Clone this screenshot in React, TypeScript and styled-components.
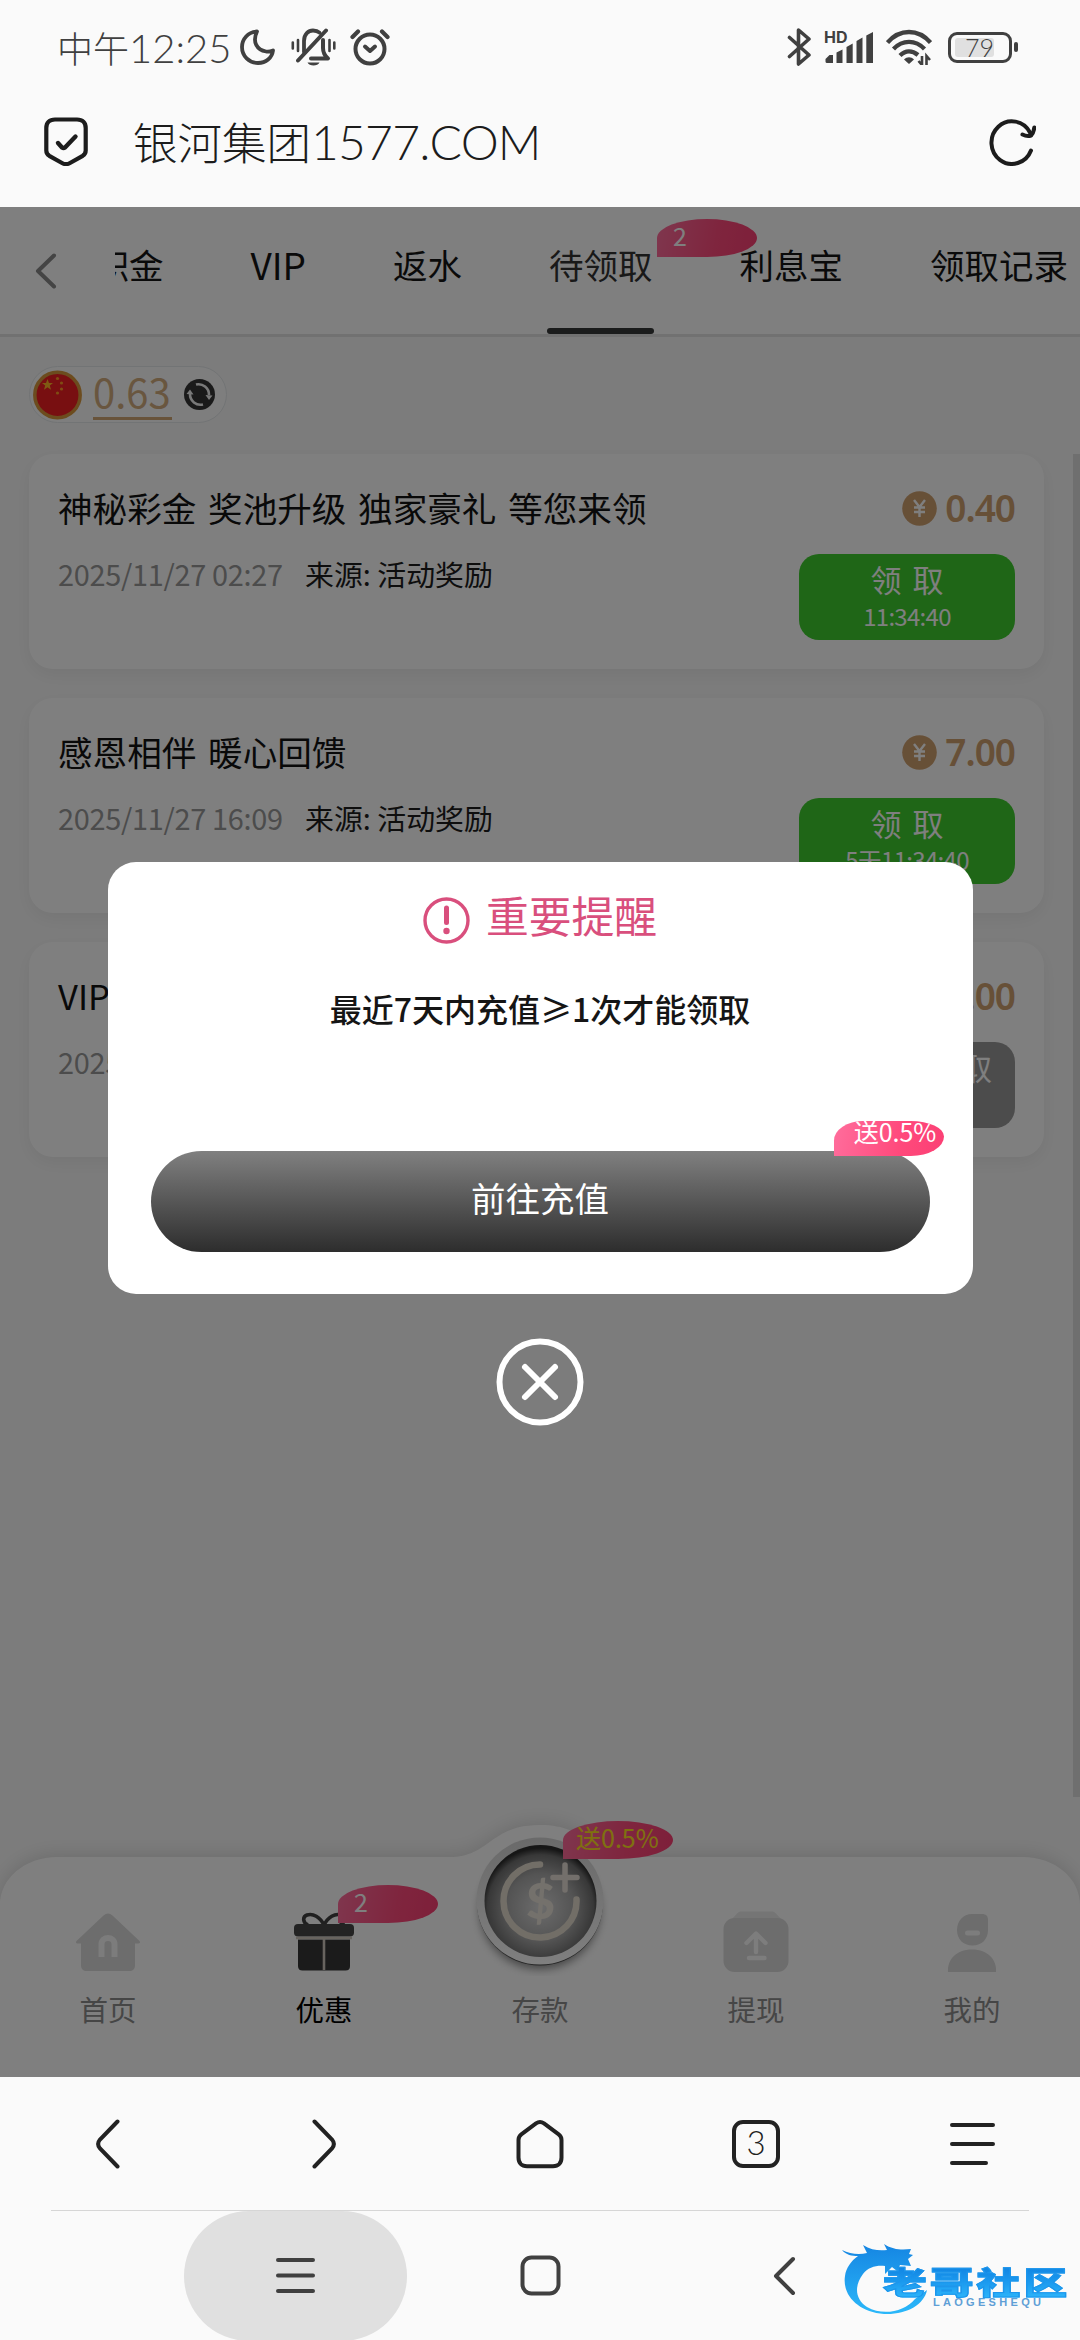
import React from "react";
import styled, { createGlobalStyle } from "styled-components";

const cjk = `"Noto Sans CJK SC", "Noto Sans", sans-serif`;
const thin = `Lato, "Noto Sans CJK SC", sans-serif`;

const GlobalStyle = createGlobalStyle`
  * { box-sizing: border-box; }
  body { margin: 0; background: #fafafa; font-family: ${cjk}; }
  svg { display: block; flex: none; }
`;

const Screen = styled.div`
  position: relative;
  width: 1080px;
  height: 2340px;
  display: flex;
  flex-direction: column;
  background: #fafafa;
  overflow: hidden;
  white-space: nowrap;
`;

/* ---------- system status bar ---------- */
const StatusBar = styled.header`
  height: 94px;
  flex: none;
  display: flex;
  align-items: center;
  justify-content: space-between;
  padding: 0 62px 0 57px;
  color: #404040;
`;
const StatusGroup = styled.div`
  display: flex;
  align-items: center;
`;
const Clock = styled.div`
  width: 183px;
  height: 46px;
  line-height: 46px;
  font: 300 36px/46px ${cjk};
`;
const ClockDigits = styled.span`
  font: 300 40px/46px ${thin};
`;
const Slot = styled.div<{ $l?: number }>`
  margin-left: ${(p) => p.$l ?? 0}px;
`;
const Signal = styled.div`
  position: relative;
  width: 50px;
  height: 34px;
  margin-left: 12px;
`;
const HdLabel = styled.span`
  position: absolute;
  left: 0;
  top: -1px;
  font: 700 16px/16px Inter, sans-serif;
`;
const Battery = styled.div`
  width: 64px;
  height: 31px;
  margin-left: 16px;
  border: 3px solid #404040;
  border-radius: 9px;
  padding: 3px 4px;
  display: flex;
`;
const BatteryFill = styled.div`
  width: 39px;
  height: 19px;
  border-radius: 3px;
  background: #e0e0e0;
  font: 300 25px/19px ${thin};
  text-align: right;
`;
const BatteryNub = styled.div`
  width: 4px;
  height: 10px;
  margin-left: 2px;
  border-radius: 2px;
  background: #404040;
`;

/* ---------- address bar ---------- */
const AddressBar = styled.div`
  height: 113px;
  flex: none;
  display: flex;
  align-items: center;
  padding: 0 44px 18px;
  color: #1c1c1c;
`;
const Address = styled.div`
  flex: 1;
  margin-left: 45px;
  font: 300 44.5px/56px ${cjk};
`;
const AddressLatin = styled.span`
  font: 300 48px/56px ${thin};
  letter-spacing: -0.8px;
`;

/* ---------- web page ---------- */
const Page = styled.main`
  position: relative;
  height: 1870px;
  flex: none;
  display: flex;
  flex-direction: column;
  background: #f9f9f9;
  overflow: hidden;
`;
const TabBar = styled.nav`
  height: 130px;
  flex: none;
  display: flex;
  border-bottom: 3px solid #e2e2e2;
  background: #fff;
`;
const Back = styled.div`
  width: 115px;
  flex: none;
  padding: 46px 0 0 35px;
`;
const TabScroller = styled.div`
  flex: 1;
  overflow: hidden;
`;
const TabRow = styled.div`
  display: flex;
  gap: 87px;
  width: max-content;
  margin-left: -20.5px;
`;
const Tab = styled.div<{ $active?: boolean }>`
  position: relative;
  height: 127px;
  padding: 36px 0 0;
  font-size: 34.5px;
  line-height: 42px;
  color: ${(p) => (p.$active ? "#333" : "#151515")};
  &::after {
    content: "";
    display: ${(p) => (p.$active ? "block" : "none")};
    position: absolute;
    left: -2px;
    right: -1px;
    bottom: 0;
    height: 6px;
    border-radius: 3px;
    background: #363838;
  }
`;
const Latin = styled.span<{ $s: number }>`
  font-size: ${(p) => p.$s}px;
`;
const Badge = styled.span<{ $x: number; $y: number; $w?: number; $h?: number; $gold?: boolean }>`
  position: absolute;
  z-index: 1;
  left: ${(p) => p.$x}px;
  top: ${(p) => p.$y}px;
  width: ${(p) => p.$w ?? 100}px;
  height: ${(p) => p.$h ?? 38}px;
  padding-left: ${(p) => (p.$w ? 13 : 16)}px;
  border-radius: 50% 50% 50% 0;
  background: linear-gradient(100deg, #ff6d9c, #ff4a7c 60%, #fb3f74);
  color: ${(p) => (p.$gold ? "#ffe01e" : "#fff")};
  font-size: 25px;
  line-height: 32px;
  overflow: hidden;
`;

const BalanceRow = styled.div`
  padding: 29px 29px 31px;
  display: flex;
`;
const BalancePill = styled.div`
  width: 198px;
  height: 57px;
  border: 1px solid #e4e8ea;
  border-radius: 29px;
  padding-left: 3px;
  display: flex;
  align-items: center;
  background: #fcfcfc;
`;
const Balance = styled.div`
  width: 79px;
  height: 49px;
  margin: 2px 12px 0 11px;
  border-bottom: 3px solid #d0a675;
  color: #d3ac7e;
  font-size: 40px;
  line-height: 41px;
`;

const ListArea = styled.section`
  height: 1343px;
  flex: none;
  display: flex;
`;
const List = styled.div`
  flex: 1;
  display: flex;
  flex-direction: column;
  gap: 29px;
  padding: 0 29px;
`;
const ScrollThumb = styled.div`
  width: 7px;
  background: #dedede;
`;
const Card = styled.article`
  height: 215px;
  flex: none;
  display: flex;
  justify-content: space-between;
  padding: 0 29px;
  border-radius: 24px;
  background: #fff;
  box-shadow: 0 6px 18px rgba(0, 0, 0, 0.06);
`;
const CardInfo = styled.div`
  padding-top: 32px;
`;
const CardTitle = styled.h3`
  margin: 0;
  font-weight: 400;
  font-size: 34.6px;
  line-height: 42px;
  word-spacing: 4px;
  color: #121212;
`;
const CardMeta = styled.div`
  margin-top: 28px;
  display: flex;
  font-size: 28.9px;
  line-height: 34px;
  color: #1c1c1c;
`;
const CardDate = styled.span`
  width: 247px;
  color: #999;
  letter-spacing: -0.3px;
`;
const CardAction = styled.div`
  padding-top: 36px;
  display: flex;
  flex-direction: column;
  align-items: flex-end;
`;
const Amount = styled.div`
  height: 36px;
  display: flex;
  align-items: center;
  gap: 8px;
  color: #cfa06f;
  font: 600 37px/36px "Noto Sans", ${cjk};
  letter-spacing: -1px;
`;
const ClaimButton = styled.button<{ $off?: boolean }>`
  width: 216px;
  height: 86px;
  margin-top: 28px;
  padding: ${(p) => (p.$off ? "0 23px 0 0" : "0")};
  border: 0;
  border-radius: 20px;
  background: ${(p) => (p.$off ? "#999" : "#3ecc2e")};
  color: #fff;
  font-family: ${cjk};
  display: flex;
  flex-direction: column;
  align-items: ${(p) => (p.$off ? "flex-end" : "center")};
`;
const ClaimLabel = styled.span`
  margin-top: 7px;
  font-size: 31px;
  line-height: 36px;
  word-spacing: 4px;
`;
const Countdown = styled.span`
  margin-top: 5px;
  font-size: 24px;
  line-height: 28px;
  letter-spacing: -0.7px;
`;

/* ---------- page bottom navigation ---------- */
const BottomNav = styled.nav`
  position: relative;
  height: 280px;
  flex: none;
  display: flex;
`;
const NavShape = styled.svg`
  position: absolute;
  left: 0;
  bottom: 0;
`;
const NavItem = styled.div<{ $active?: boolean }>`
  position: relative;
  flex: 1;
  display: flex;
  flex-direction: column;
  align-items: center;
  justify-content: flex-end;
  padding-bottom: 51px;
  color: ${(p) => (p.$active ? "#000" : "#8c8c8c")};
`;
const NavLabel = styled.span<{ $gap?: number }>`
  margin-top: ${(p) => p.$gap ?? 20}px;
  font-size: 28.5px;
  line-height: 34px;
`;

/* ---------- dialog ---------- */
const Overlay = styled.div`
  position: absolute;
  inset: 0;
  z-index: 5;
  display: flex;
  flex-direction: column;
  align-items: center;
  padding-top: 655px;
  background: rgba(0, 0, 0, 0.5);
`;
const Dialog = styled.div`
  width: 865px;
  height: 432px;
  flex: none;
  padding: 33px 43px 0;
  border-radius: 28px;
  background: #fff;
`;
const DialogTitle = styled.div`
  height: 50px;
  display: flex;
  justify-content: center;
  gap: 16px;
  color: #d94f7d;
  font-size: 42.8px;
  line-height: 38px;
`;
const DialogText = styled.div`
  margin-top: 43px;
  text-align: center;
  font-weight: 500;
  font-size: 32px;
  line-height: 40px;
  color: #151515;
`;
const PrimaryButton = styled.div`
  position: relative;
  height: 101px;
  margin-top: 123px;
  border-radius: 51px;
  background: linear-gradient(#808080, #2d2d2d);
  color: #fff;
  text-align: center;
  font-size: 34.5px;
  line-height: 92px;
`;
const DialogBadge = styled(Badge)`
  border-radius: 30px 34px 34px 0 / 20px 16px 20px 0;
  line-height: 20px;
`;
const Close = styled.div`
  margin-top: 44px;
`;

/* ---------- browser / system navigation ---------- */
const BrowserNav = styled.nav`
  height: 134px;
  flex: none;
  display: flex;
  align-items: center;
  color: #222;
`;
const Cell = styled.div`
  flex: 1;
  display: flex;
  justify-content: center;
`;
const TabCount = styled.div`
  width: 48px;
  height: 48px;
  border: 4px solid #222;
  border-radius: 11px;
  text-align: center;
  font: 300 33px/37px ${thin};
`;
const Divider = styled.div`
  position: absolute;
  left: 51px;
  right: 51px;
  top: 2210px;
  height: 1px;
  background: rgba(0, 0, 0, 0.14);
`;
const SystemNav = styled.nav`
  height: 129px;
  flex: none;
  display: flex;
  padding-left: 184px;
  align-items: center;
`;
const RecentPill = styled.div`
  width: 223px;
  height: 130px;
  border-radius: 65px;
  background: #e0e0e0;
  display: flex;
  align-items: center;
  justify-content: center;
`;
const Watermark = styled.div`
  position: absolute;
  left: 840px;
  top: 2240px;
  width: 226px;
  height: 76px;
`;
const WatermarkName = styled.div`
  position: absolute;
  left: 43px;
  top: 24px;
  font-weight: 900;
  font-size: 31px;
  line-height: 34px;
  letter-spacing: 2.2px;
  transform: scaleX(1.41);
  transform-origin: 0 0;
  background: linear-gradient(#1080e0, #1a98ee 50%, #2cb4fa);
  background-clip: text;
  -webkit-background-clip: text;
  color: transparent;
  -webkit-text-stroke: 1px #1c96ec;
`;
const WatermarkLatin = styled.div`
  position: absolute;
  left: 93px;
  top: 56px;
  font: 700 11px/12px "Liberation Sans", sans-serif;
  letter-spacing: 3.3px;
  color: #5f9fd6;
`;

const Moon = () => (
  <svg width="35" height="36" viewBox="0 0 35 36" fill="none" stroke="currentColor" strokeWidth="3.8" strokeLinejoin="round">
    <path d="M17 2.5C8 3 2 10 2 18c0 9 7 16 16 16 8 0 14-5 15-12.500-2.500 1-4.500 1.500-7 1C17 21 12 13 17 2.500z" />
  </svg>
);
const BellOff = () => (
  <svg width="45" height="38" viewBox="0 0 45 38" fill="none" stroke="currentColor" strokeLinecap="round">
    <path d="M13 24V13C13 6 17.500 2.500 22 2.500c3 0 5 .8 6.500 2.200" strokeWidth="3.800" />
    <path d="M7 32.500 35 2.500" strokeWidth="4" />
    <path d="M32 12v8c0 4 1 7 5 10.500H20" strokeWidth="4" strokeLinejoin="round" />
    <path d="M16.500 34.500h12c-1.500 4-10.500 4-12 0z" fill="currentColor" stroke="none" />
    <path d="M1.800 14.500v6M7 12v11M38.500 12v11M43.300 14.500v6" strokeWidth="2.600" />
  </svg>
);
const Alarm = () => (
  <svg width="40" height="38" viewBox="0 0 40 38" fill="none" stroke="currentColor" strokeWidth="4" strokeLinecap="round" strokeLinejoin="round">
    <circle cx="20" cy="21" r="14.500" />
    <path d="m15 18.500 5 4.500 5-4.500" />
    <path d="M2.500 9 8 3.500M37.500 9 32 3.500" strokeWidth="4.200" />
  </svg>
);
const Bluetooth = () => (
  <svg width="25" height="40" viewBox="0 0 25 40" fill="none" stroke="currentColor" strokeWidth="3.600" strokeLinecap="round" strokeLinejoin="round">
    <path d="M2.500 10.500 22 28 11.500 37V3L22 12 2.500 29.500" />
  </svg>
);
const SignalBars = () => (
  <svg width="50" height="34" viewBox="0 0 50 34" fill="currentColor">
    <path d="M1.500 31.500V29l4-4H9v8H3a1.500 1.500 0 0 1-1.500-1.500zM12.500 33V22.500l6-3V33zM22.500 33V17l6.200-3.500V33zM32.500 33V11l6-3.500V33zM42.300 33V5.500L49 2v31z" />
  </svg>
);
const Wifi = () => (
  <svg width="46" height="36" viewBox="0 0 46 36" fill="none" stroke="currentColor" strokeWidth="4.300">
    <path d="M1.500 13.500C14-.5 32-.5 44.500 13.500M7.500 20c9-9.500 22-9.500 31 0M14 26.500c5.500-5.500 12-5.500 18-.5" />
    <path d="m18 30.500 5 4.500 5-4.500c-3-3-7-3-10 0z" fill="currentColor" stroke="none" />
    <path d="M36 27v9l-3.500-4M40.500 36v-9l3.500 4" strokeWidth="2.600" />
  </svg>
);
const Shield = () => (
  <svg width="44" height="49" viewBox="0 0 44 49" fill="none" stroke="currentColor" strokeWidth="4.200" strokeLinecap="round" strokeLinejoin="round">
    <path d="M11 2.500h22c5.500 0 8.700 3.200 8.700 8.500v22.500c0 2.500-1 4-3 5.300L26 46c-3 1.700-5 1.700-8 0L5.300 38.800c-2-1.300-3-2.800-3-5.300V11c0-5.300 3.200-8.500 8.700-8.500z" />
    <path d="m14 26 4 4.500c1 .8 2 .8 3 0L31.500 19.500" strokeWidth="4.400" />
  </svg>
);
const Reload = () => (
  <svg width="47" height="48" viewBox="0 0 47 48" fill="none" stroke="currentColor" strokeWidth="4" strokeLinecap="round" strokeLinejoin="round">
    <path d="M42 32.500A20.500 21.300 0 1 1 41 14.500l1 2.500" />
    <path d="m33.500 16.500c3 1.500 6 1.800 8.500 1 2-2 3-4.500 3.300-8" />
  </svg>
);

const Flag = () => (
  <svg width="49" height="50" viewBox="0 0 49 50">
    <circle cx="24.500" cy="25" r="22.700" fill="#f01f22" stroke="#d9983c" strokeWidth="3.500" />
    <path d="m14.500 9 1.500 4h4l-3.200 2.600 1.200 4.200-3.500-2.500-3.500 2.500 1.200-4.200L9 13h4z" fill="#ffb526" />
    <g fill="#ff9a26">
      <circle cx="24.500" cy="8.500" r="1.600" />
      <circle cx="28.500" cy="13" r="1.600" />
      <circle cx="28.500" cy="19" r="1.600" />
      <circle cx="24.500" cy="23" r="1.600" />
    </g>
  </svg>
);
const Sync = () => (
  <svg width="31" height="31" viewBox="0 0 31 31">
    <circle cx="15.500" cy="15.500" r="15.500" fill="#353535" />
    <g fill="none" stroke="#f2f2f2" strokeWidth="2.600">
      <path d="M12 5.600A10.500 10.500 0 0 1 25 16" />
      <path d="M19 25.400A10.500 10.500 0 0 1 6 15" />
    </g>
    <path d="m21.500 16 7 .6-3.500 4.400zM2.500 15l3.500-4.500 3.500 5z" fill="#f2f2f2" />
  </svg>
);
const Coin = () => (
  <svg width="35" height="35" viewBox="0 0 35 35">
    <circle cx="17.500" cy="17.500" r="17.300" fill="#cfa06f" />
    <path d="m12 9 5.500 7L23 9M12 16.500h11M12 21h11M17.500 16v10" fill="none" stroke="#fff" strokeWidth="2.400" />
  </svg>
);
const HomeIcon = () => (
  <svg width="66" height="60" viewBox="0 0 66 60">
    <path d="M1.500 29 28.500 3.500c3-2.700 6-2.700 9 0L64.500 29c1 1.300.5 2.500-1 2.500H60V53c0 4-2 6-6 6H12c-4 0-6-2-6-6V31.500H2.500c-1.500 0-2-1.200-1-2.500z" fill="#dadada" />
    <path d="M26.500 45V32c0-8 13-8 13 0v13" fill="none" stroke="#f8f8f8" strokeWidth="6" strokeLinejoin="round" />
  </svg>
);
const GiftIcon = () => (
  <svg width="62" height="60" viewBox="0 0 62 60">
    <g fill="none" stroke="#404040" strokeWidth="3.600">
      <path d="M31 13C27 5 20 1 14 3c-5 2-4 8 1 10" />
      <path d="M31 13c4-8 11-12 17-10 5 2 4 8-1 10" />
    </g>
    <rect x="1" y="12" width="60" height="12.500" rx="4" fill="#474747" />
    <path d="M5 27.500h52V54c0 3-1.500 4.500-4.500 4.500h-43C6.500 58.500 5 57 5 54z" fill="#363636" />
    <path d="M3 26h56M31 26v32" stroke="#d0c8be" strokeWidth="2.600" />
  </svg>
);
const WithdrawIcon = () => (
  <svg width="66" height="61" viewBox="0 0 66 61">
    <path d="M8 9 14 2.500C15.500.8 17 .5 19 .5h29c2 0 3.500.3 5 2L59 9z" fill="#ebebeb" />
    <rect x="0.500" y="7" width="65" height="54" rx="11" fill="#dadada" />
    <path d="M33 41V23M23.500 32 33 22.500 42.500 32M26 47h15.500" fill="none" stroke="#fafafa" strokeWidth="4.400" strokeLinecap="round" strokeLinejoin="round" />
  </svg>
);
const UserIcon = () => (
  <svg width="50" height="59" viewBox="0 0 50 59">
    <path d="M25 1h10c4 0 6 2 6 6v10c0 9-6 15.500-15.500 15.500S10 26 10 17 16 1 25 1z" fill="#dadada" />
    <rect x="18" y="17.500" width="15" height="5" rx="2.500" fill="#fafafa" />
    <path d="M1 59C0 47 9 36.500 25 36.500S50 47 49 59z" fill="#dadada" />
  </svg>
);
const DepositIcon = () => (
  <svg width="150" height="150" viewBox="0 0 150 150" style={{ margin: "-10px" }}>
    <defs>
      <radialGradient id="disc" cx="50%" cy="56%" r="55%">
        <stop offset="0%" stopColor="#d8d8d8" />
        <stop offset="55%" stopColor="#a8a8a8" />
        <stop offset="86%" stopColor="#707070" />
        <stop offset="97%" stopColor="#2c2c2c" />
      </radialGradient>
      <linearGradient id="rim" x1="0" y1="0" x2="0" y2="1">
        <stop offset="0%" stopColor="#d4d4d4" />
        <stop offset="100%" stopColor="#fff" />
      </linearGradient>
    </defs>
    <ellipse cx="75" cy="84" rx="60" ry="59" fill="#888" style={{ filter: "blur(5px)" }} />
    <circle cx="75" cy="76.500" r="63" fill="#4a4a4a" />
    <circle cx="75" cy="75" r="63.500" fill="url(#rim)" />
    <circle cx="75.500" cy="75" r="56" fill="url(#disc)" />
    <path d="M75 38.500a36.500 36.500 0 1 0 36.500 35" fill="none" stroke="#e4dccf" strokeWidth="6.500" strokeLinecap="round" />
    <path d="M100 39v25M88 51.500h24" stroke="#e6ded6" strokeWidth="5.500" strokeLinecap="round" />
    <text x="75.500" y="93" textAnchor="middle" fontFamily="Lato, sans-serif" fontWeight="900" fontSize="50" fill="#e8e2d8">$</text>
  </svg>
);
const Lines = ({ w, short, gap }: { w: number; short: number; gap: number }) => (
  <svg width={w + 4} height={gap * 2 + 4} viewBox={`0 0 ${w + 4} ${gap * 2 + 4}`} stroke="currentColor" strokeWidth="4" strokeLinecap="round">
    <path d={`M2 2h${w}M2 ${gap + 2}h${w}M2 ${gap * 2 + 2}h${short}`} />
  </svg>
);

const rewards = [
  { title: "神秘彩金 奖池升级 独家豪礼 等您来领", date: "2025/11/27 02:27", amount: "0.40", left: "11:34:40" },
  { title: "感恩相伴 暖心回馈", date: "2025/11/27 16:09", amount: "7.00", left: "5天11:34:40" },
  { title: "VIP", date: "2025", amount: "0.00", left: "" },
];

export default function App() {
  return (
    <Screen>
      <GlobalStyle />
      <StatusBar>
        <StatusGroup>
          <Clock>中午<ClockDigits>12:25</ClockDigits></Clock>
          <Moon />
          <Slot $l={16}><BellOff /></Slot>
          <Slot $l={14}><Alarm /></Slot>
        </StatusGroup>
        <StatusGroup>
          <Bluetooth />
          <Signal><HdLabel>HD</HdLabel><SignalBars /></Signal>
          <Slot $l={12}><Wifi /></Slot>
          <Battery><BatteryFill>79</BatteryFill></Battery>
          <BatteryNub />
        </StatusGroup>
      </StatusBar>
      <AddressBar>
        <Shield />
        <Address>银河集团<AddressLatin>1577.COM</AddressLatin></Address>
        <Reload />
      </AddressBar>

      <Page>
        <TabBar>
          <Back>
            <svg width="22" height="36" viewBox="0 0 22 36" fill="none" stroke="#888" strokeWidth="4" strokeLinecap="round" strokeLinejoin="round">
              <path d="M19 2.500 3 18l16 15.500" />
            </svg>
          </Back>
          <TabScroller>
            <TabRow>
              <Tab>积金</Tab>
              <Tab><Latin $s={37}>VIP</Latin></Tab>
              <Tab>返水</Tab>
              <Tab $active>待领取<Badge $x={108} $y={12}>2</Badge></Tab>
              <Tab style={{ zIndex: 2 }}>利息宝</Tab>
              <Tab>领取记录</Tab>
            </TabRow>
          </TabScroller>
        </TabBar>
        <BalanceRow>
          <BalancePill>
            <Flag />
            <Balance>0.63</Balance>
            <Sync />
          </BalancePill>
        </BalanceRow>
        <ListArea>
          <List>
            {rewards.map((r) => (
              <Card key={r.title}>
                <CardInfo>
                  <CardTitle>{r.title}</CardTitle>
                  <CardMeta>
                    <CardDate>{r.date}</CardDate>
                    {r.left && <span>来源: 活动奖励</span>}
                  </CardMeta>
                </CardInfo>
                <CardAction>
                  <Amount><Coin />{r.amount}</Amount>
                  <ClaimButton $off={!r.left}>
                    <ClaimLabel>领 取</ClaimLabel>
                    {r.left && <Countdown>{r.left}</Countdown>}
                  </ClaimButton>
                </CardAction>
              </Card>
            ))}
          </List>
          <ScrollThumb />
        </ListArea>
        <BottomNav>
          <NavShape width="1080" height="300" viewBox="0 -20 1080 300">
            <path
              d="M0 280V108C0 82 24 60 58 60H450C490 60 490 28 540 28S590 60 630 60H1022C1056 60 1080 82 1080 108V280z"
              fill="#fff"
              style={{ filter: "drop-shadow(0 -3px 9px rgba(0,0,0,.12))" }}
            />
          </NavShape>
          <NavItem><HomeIcon /><NavLabel>首页</NavLabel></NavItem>
          <NavItem $active><GiftIcon /><Badge $x={122} $y={88}>2</Badge><NavLabel>优惠</NavLabel></NavItem>
          <NavItem><DepositIcon /><Badge $x={131} $y={24} $w={110} $gold>送0.5%</Badge><NavLabel $gap={26}>存款</NavLabel></NavItem>
          <NavItem><WithdrawIcon /><NavLabel>提现</NavLabel></NavItem>
          <NavItem><UserIcon /><NavLabel>我的</NavLabel></NavItem>
        </BottomNav>

        <Overlay>
          <Dialog>
            <DialogTitle>
              <svg width="47" height="47" viewBox="0 0 47 47" fill="none" stroke="currentColor" style={{ marginTop: 2 }}>
                <circle cx="23.500" cy="23.500" r="21.500" strokeWidth="3.400" />
                <path d="M23.500 11v14.500" strokeWidth="5" strokeLinecap="round" />
                <circle cx="23.500" cy="34" r="3.200" fill="currentColor" stroke="none" />
              </svg>
              重要提醒
            </DialogTitle>
            <DialogText>最近7天内充值≥1次才能领取</DialogText>
            <PrimaryButton>
              前往充值
              <DialogBadge $x={683} $y={-30} $w={110} $h={35}>送0.5%</DialogBadge>
            </PrimaryButton>
          </Dialog>
          <Close>
            <svg width="88" height="88" viewBox="0 0 88 88" fill="none" stroke="#fff" strokeLinecap="round">
              <circle cx="44" cy="44" r="40.500" strokeWidth="6" />
              <path d="m29 29 30 30M59 29 29 59" strokeWidth="6" />
            </svg>
          </Close>
        </Overlay>
      </Page>

      <BrowserNav>
        <Cell>
          <svg width="24" height="50" viewBox="0 0 24 50" fill="none" stroke="currentColor" strokeWidth="4" strokeLinecap="round">
            <path d="M21.500 2.500 4 20.500c-2.500 3-2.500 6 0 9l17.500 18" />
          </svg>
        </Cell>
        <Cell>
          <svg width="24" height="50" viewBox="0 0 24 50" fill="none" stroke="currentColor" strokeWidth="4" strokeLinecap="round">
            <path d="m2.500 2.500 17.500 18c2.500 3 2.500 6 0 9l-17.500 18" />
          </svg>
        </Cell>
        <Cell>
          <svg width="48" height="50" viewBox="0 0 48 50" fill="none" stroke="currentColor" strokeWidth="4" strokeLinejoin="round">
            <path d="M2.500 21c0-2.500.8-4.200 2.800-5.700L20 4.300c3-2 5-2 8 0l14.700 11c2 1.500 2.800 3.200 2.800 5.700v17.500c0 5.500-3 8.800-8.500 8.800H11c-5.500 0-8.500-3.300-8.500-8.800z" />
          </svg>
        </Cell>
        <Cell><TabCount>3</TabCount></Cell>
        <Cell><Lines w={41} short={34} gap={19} /></Cell>
      </BrowserNav>
      <SystemNav>
        <RecentPill style={{ color: "#404040" }}><Lines w={35} short={35} gap={15.5} /></RecentPill>
        <Slot $l={113}>
          <svg width="41" height="41" viewBox="0 0 41 41" fill="none" stroke="#404040" strokeWidth="4">
            <rect x="2.500" y="2.500" width="36" height="36" rx="9" />
          </svg>
        </Slot>
        <Slot $l={212}>
          <svg width="23" height="40" viewBox="0 0 23 40" fill="none" stroke="#404040" strokeWidth="4" strokeLinecap="round" strokeLinejoin="round">
            <path d="M20 3 3 20l17 17" />
          </svg>
        </Slot>
      </SystemNav>
      <Divider />
      <Watermark>
        <svg width="100" height="76" viewBox="0 0 100 76">
          <defs>
            <linearGradient id="dragon" x1="0" y1="0" x2="0" y2="1">
              <stop offset="0%" stopColor="#1585e2" />
              <stop offset="100%" stopColor="#2bb8fa" />
            </linearGradient>
          </defs>
          <path fill="url(#dragon)" d="M2 10c8 4 17 5 25 3l-4-8c8 5 16 6 24 5l-3-6c9 6 18 6 27 5l-2 5 4 1-5 4 3 7-11-1-3 6-5-4-7 7v-8c-8-1-17 1-22 8-9 12-8 25 4 33 16 9 37 5 48-8l12-9C84 65 66 75 44 74 18 72 2 55 5 36c1-8 6-15 13-20-6 0-12-1-16-6z" />
        </svg>
        <WatermarkName>老哥社区</WatermarkName>
        <WatermarkLatin>LAOGESHEQU</WatermarkLatin>
      </Watermark>
    </Screen>
  );
}
